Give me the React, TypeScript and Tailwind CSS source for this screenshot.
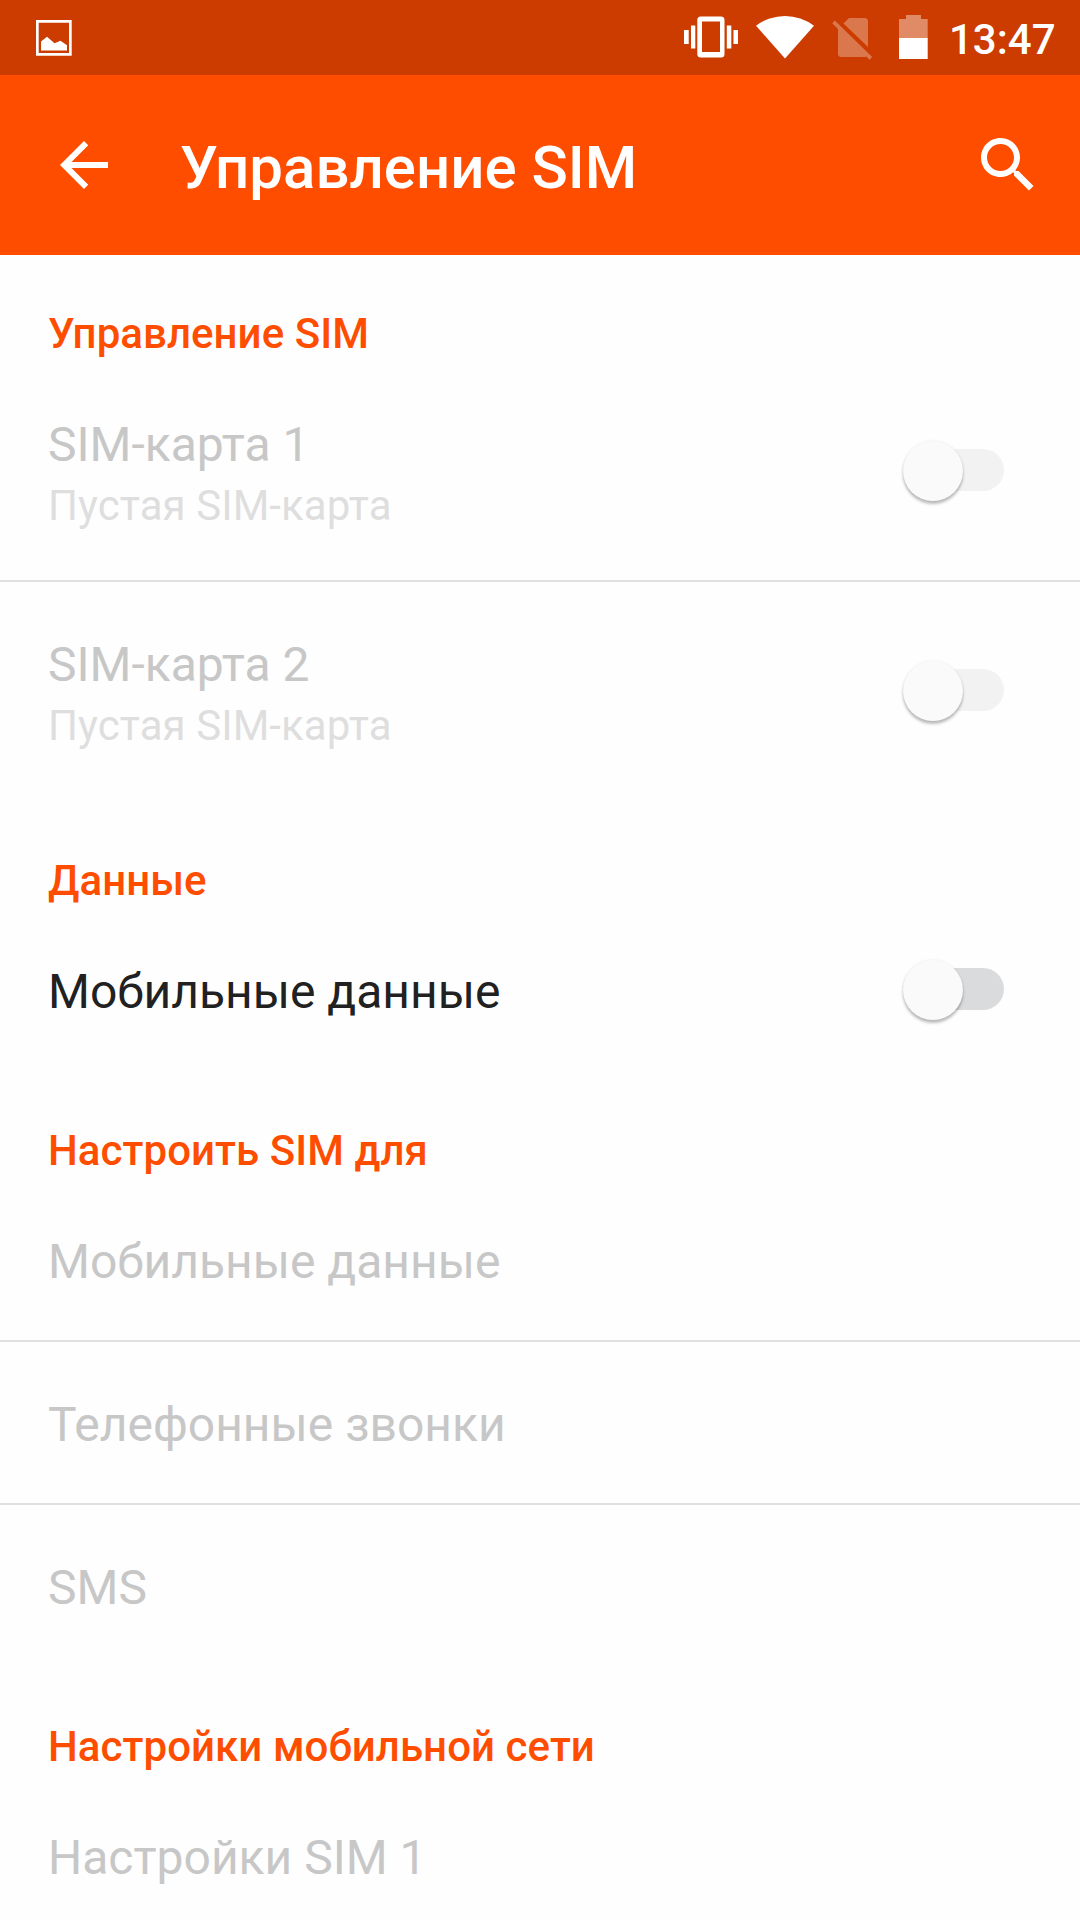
type SwitchProps = {
  disabled?: boolean;
};

type RowProps = {
  title: string;
  summary?: string;
  disabled?: boolean;
  hasSwitch?: boolean;
};

type Section = {
  title: string;
  rows: RowProps[];
};

const sections: Section[] = [
  {
    title: 'Управление SIM',
    rows: [
      { title: 'SIM-карта 1', summary: 'Пустая SIM-карта', disabled: true, hasSwitch: true },
      { title: 'SIM-карта 2', summary: 'Пустая SIM-карта', disabled: true, hasSwitch: true },
    ],
  },
  {
    title: 'Данные',
    rows: [{ title: 'Мобильные данные', hasSwitch: true }],
  },
  {
    title: 'Настроить SIM для',
    rows: [
      { title: 'Мобильные данные', disabled: true },
      { title: 'Телефонные звонки', disabled: true },
      { title: 'SMS', disabled: true },
    ],
  },
  {
    title: 'Настройки мобильной сети',
    rows: [{ title: 'Настройки SIM 1', disabled: true }],
  },
];

function Switch({ disabled }: SwitchProps) {
  return (
    <span className="relative flex h-[60px] w-[102px] items-center justify-end">
      <span className={`h-[42px] w-[84px] rounded-full ${disabled ? 'bg-[#f2f2f2]' : 'bg-[#dadbdd]'}`} />
      <span className="absolute left-[0.7px] top-[0.5px] size-[60px] rounded-full bg-[#fafafa] shadow-[0_3px_3px_rgba(0,0,0,0.26),0_0_3px_rgba(0,0,0,0.08)]" />
    </span>
  );
}

function Row({ title, summary, disabled, hasSwitch }: RowProps) {
  return (
    <div
      className={`flex items-start justify-between border-t-2 border-[#e0e0e0] pl-12 pr-[76px] first:border-transparent ${
        summary ? 'h-[220px]' : 'h-[163px]'
      }`}
    >
      <div className="pt-[55px]">
        <div className={`text-[48px] leading-[56px] ${disabled ? 'text-[#c7c7c7]' : 'text-[#212121]'}`}>{title}</div>
        {summary && (
          <div className="mt-2 text-[42px] leading-[50px] tracking-[0.06px] text-[#dedede]">{summary}</div>
        )}
      </div>
      {hasSwitch && (
        <div className={summary ? 'pt-[78px]' : 'pt-[50px]'}>
          <Switch disabled={disabled} />
        </div>
      )}
    </div>
  );
}

function StatusBar() {
  return (
    <div className="flex h-[75px] items-center bg-[#cc3c00] text-white">
      <svg width="36" height="36" viewBox="0 0 36 36" className="ml-9 mt-px" fill="currentColor">
        <path d="M0 0h35.700v35.700H0zM2.700 2.700v30.300h30.300V2.700z" fillRule="evenodd" />
        <path d="M5 21.500l6-4.700 7.500 6.500 6-2.500 6.500 4.500v5.200H5z" />
      </svg>
      <svg width="280" height="75" viewBox="0 0 280 75" className="ml-auto" fill="currentColor">
        {/* vibrate */}
        <path d="M24 30h4.700v14H24zM31 25.500h4.300v23H31zM66.800 25.500h4.500v23h-4.500zM73.500 30h4.500v14h-4.500z" />
        <path
          fillRule="evenodd"
          d="M40.800 16.500h20.200a3.500 3.500 0 0 1 3.500 3.500v34a3.500 3.500 0 0 1-3.500 3.500H40.800a3.500 3.500 0 0 1-3.500-3.500V20a3.500 3.500 0 0 1 3.500-3.500zM42 21.500v30.600h18v-30.600z"
        />
        {/* wifi */}
        <path d="M96 25.700a48 48 0 0 1 58 0L125 58.500z" />
        {/* no sim */}
        <g opacity="0.3">
          <path d="M189 18h15.500a3.500 3.500 0 0 1 3.500 3.500v25.500L183.500 23.500z" />
          <path d="M172.200 23.200l2.600-2.700 37.400 36.500-2.700 2.700-3.200-3.100q-.7.400-1.800.4H181.500a3.500 3.500 0 0 1-3.500-3.500V29z" />
        </g>
        {/* battery */}
        <path opacity="0.4" d="M246 15h15v4h6.700v19H239V19h7z" />
        <path d="M239 38h28.700v21H239z" />
      </svg>
      <span className="w-[140px] pl-[9px] pt-1 text-[42px] font-medium leading-[50px]">13:47</span>
    </div>
  );
}

function AppBar() {
  return (
    <div className="flex h-[180px] items-center bg-[#ff4d00] text-white">
      <svg width="72" height="72" viewBox="0 0 24 24" className="ml-12 shrink-0" fill="currentColor">
        <path d="M20 11H7.830l5.590-5.590L12 4l-8 8 8 8 1.410-1.410L7.830 13H20v-2z" />
      </svg>
      <h1 className="ml-[60px] pt-[5px] text-[60px] font-medium leading-[70px]">Управление SIM</h1>
      <svg width="72" height="72" viewBox="0 0 24 24" className="ml-auto mr-9 shrink-0" fill="currentColor">
        <path d="M15.500 14h-.79l-.28-.27C15.410 12.590 16 11.110 16 9.500 16 5.910 13.090 3 9.500 3S3 5.910 3 9.500 5.910 16 9.500 16c1.610 0 3.090-.59 4.230-1.570l.27.28v.79l5 4.990L20.490 19l-4.990-5zm-6 0C7.010 14 5 11.990 5 9.500S7.010 5 9.500 5 14 7.010 14 9.500 11.990 14 9.500 14z" />
      </svg>
    </div>
  );
}

export default function App() {
  return (
    <div className="h-[1920px] w-[1080px] overflow-hidden bg-[#fefefe] font-['Roboto',sans-serif]">
      <StatusBar />
      <AppBar />
      {sections.map((section) => (
        <section key={section.title} className="pb-0.5">
          <h2 className="flex h-[105px] items-end px-12 pb-px text-[42px] font-medium leading-[50px] tracking-[0.06px] text-[#ff4d00]">
            {section.title}
          </h2>
          <div>
            {section.rows.map((row) => (
              <Row key={row.title} {...row} />
            ))}
          </div>
        </section>
      ))}
    </div>
  );
}
